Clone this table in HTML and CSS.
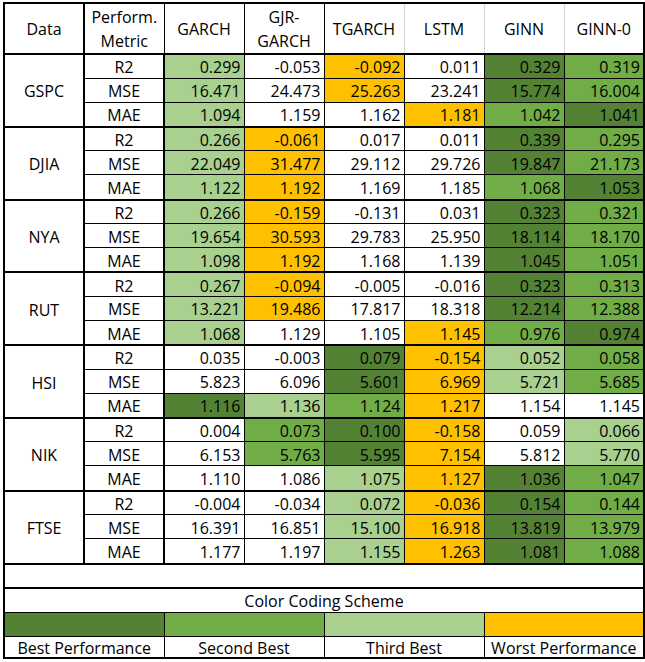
FILE: index.html
```html
<!DOCTYPE html>
<html lang="en">
<head>
<meta charset="utf-8">
<title>Model performance comparison</title>
<link rel="stylesheet" href="styles.css">
</head>
<body>
<table class="results">
  <colgroup>
    <col class="col"><col class="col"><col class="col"><col class="col"><col class="col"><col class="col"><col class="col"><col class="col">
  </colgroup>
  <thead>
    <tr class="head">
      <th class="h-data">Data</th>
      <th class="h-metric">Perform.<br>Metric</th>
      <th class="h-dark">GARCH</th>
      <th class="h-dark">GJR-<br>GARCH</th>
      <th>TGARCH</th>
      <th>LSTM</th>
      <th>GINN</th>
      <th class="h-last">GINN-0</th>
    </tr>
  </thead>
  <tbody class="group">
    <tr class="r1"><td class="name" rowspan="3">GSPC</td><td class="metric">R2</td><td class="b3">0.299</td><td>-0.053</td><td class="w">-0.092</td><td>0.011</td><td class="b1">0.329</td><td class="b2">0.319</td></tr>
    <tr class="r2"><td class="metric">MSE</td><td class="b3">16.471</td><td>24.473</td><td class="w">25.263</td><td>23.241</td><td class="b1">15.774</td><td class="b2">16.004</td></tr>
    <tr class="r3"><td class="metric">MAE</td><td class="b3">1.094</td><td>1.159</td><td>1.162</td><td class="w">1.181</td><td class="b2">1.042</td><td class="b1">1.041</td></tr>
  </tbody>
  <tbody class="group">
    <tr class="r1"><td class="name" rowspan="3">DJIA</td><td class="metric">R2</td><td class="b3">0.266</td><td class="w">-0.061</td><td>0.017</td><td>0.011</td><td class="b1">0.339</td><td class="b2">0.295</td></tr>
    <tr class="r2"><td class="metric">MSE</td><td class="b3">22.049</td><td class="w">31.477</td><td>29.112</td><td>29.726</td><td class="b1">19.847</td><td class="b2">21.173</td></tr>
    <tr class="r3"><td class="metric">MAE</td><td class="b3">1.122</td><td class="w">1.192</td><td>1.169</td><td>1.185</td><td class="b2">1.068</td><td class="b1">1.053</td></tr>
  </tbody>
  <tbody class="group">
    <tr class="r1"><td class="name" rowspan="3">NYA</td><td class="metric">R2</td><td class="b3">0.266</td><td class="w">-0.159</td><td>-0.131</td><td>0.031</td><td class="b1">0.323</td><td class="b2">0.321</td></tr>
    <tr class="r2"><td class="metric">MSE</td><td class="b3">19.654</td><td class="w">30.593</td><td>29.783</td><td>25.950</td><td class="b1">18.114</td><td class="b2">18.170</td></tr>
    <tr class="r3"><td class="metric">MAE</td><td class="b3">1.098</td><td class="w">1.192</td><td>1.168</td><td>1.139</td><td class="b1">1.045</td><td class="b2">1.051</td></tr>
  </tbody>
  <tbody class="group">
    <tr class="r1"><td class="name" rowspan="3">RUT</td><td class="metric">R2</td><td class="b3">0.267</td><td class="w">-0.094</td><td>-0.005</td><td>-0.016</td><td class="b1">0.323</td><td class="b2">0.313</td></tr>
    <tr class="r2"><td class="metric">MSE</td><td class="b3">13.221</td><td class="w">19.486</td><td>17.817</td><td>18.318</td><td class="b1">12.214</td><td class="b2">12.388</td></tr>
    <tr class="r3"><td class="metric">MAE</td><td class="b3">1.068</td><td>1.129</td><td>1.105</td><td class="w">1.145</td><td class="b2">0.976</td><td class="b1">0.974</td></tr>
  </tbody>
  <tbody class="group">
    <tr class="r1"><td class="name" rowspan="3">HSI</td><td class="metric">R2</td><td>0.035</td><td>-0.003</td><td class="b1">0.079</td><td class="w">-0.154</td><td class="b3">0.052</td><td class="b2">0.058</td></tr>
    <tr class="r2"><td class="metric">MSE</td><td>5.823</td><td>6.096</td><td class="b1">5.601</td><td class="w">6.969</td><td class="b3">5.721</td><td class="b2">5.685</td></tr>
    <tr class="r3"><td class="metric">MAE</td><td class="b1">1.116</td><td class="b3">1.136</td><td class="b2">1.124</td><td class="w">1.217</td><td>1.154</td><td>1.145</td></tr>
  </tbody>
  <tbody class="group">
    <tr class="r1"><td class="name" rowspan="3">NIK</td><td class="metric">R2</td><td>0.004</td><td class="b2">0.073</td><td class="b1">0.100</td><td class="w">-0.158</td><td>0.059</td><td class="b3">0.066</td></tr>
    <tr class="r2"><td class="metric">MSE</td><td>6.153</td><td class="b2">5.763</td><td class="b1">5.595</td><td class="w">7.154</td><td>5.812</td><td class="b3">5.770</td></tr>
    <tr class="r3"><td class="metric">MAE</td><td>1.110</td><td>1.086</td><td class="b3">1.075</td><td class="w">1.127</td><td class="b1">1.036</td><td class="b2">1.047</td></tr>
  </tbody>
  <tbody class="group">
    <tr class="r1"><td class="name" rowspan="3">FTSE</td><td class="metric">R2</td><td>-0.004</td><td>-0.034</td><td class="b3">0.072</td><td class="w">-0.036</td><td class="b1">0.154</td><td class="b2">0.144</td></tr>
    <tr class="r2"><td class="metric">MSE</td><td>16.391</td><td>16.851</td><td class="b3">15.100</td><td class="w">16.918</td><td class="b1">13.819</td><td class="b2">13.979</td></tr>
    <tr class="r3"><td class="metric">MAE</td><td>1.177</td><td>1.197</td><td class="b3">1.155</td><td class="w">1.263</td><td class="b1">1.081</td><td class="b2">1.088</td></tr>
  </tbody>
  <tbody class="legend">
    <tr class="blank"><td colspan="8"></td></tr>
    <tr class="title"><td colspan="8">Color Coding Scheme</td></tr>
    <tr class="swatches"><td colspan="2" class="b1"></td><td colspan="2" class="b2"></td><td colspan="2" class="b3"></td><td colspan="2" class="w"></td></tr>
    <tr class="labels"><td colspan="2">Best Performance</td><td colspan="2">Second Best</td><td colspan="2">Third Best</td><td colspan="2">Worst Performance</td></tr>
  </tbody>
</table>
</body>
</html>
```

FILE: styles.css
```css
html, body {
  margin: 0;
  padding: 0;
  background: #ffffff;
}

body {
  font-family: "Open Sans", "Liberation Sans", sans-serif;
  font-size: 16px;
  color: #000000;
  padding: 2px 0 0 3px;
}

.results {
  border-collapse: collapse;
  table-layout: fixed;
  width: 638px;
  border: 2px solid #000;
}

.col {
  width: 80px;
}

.results th,
.results td {
  padding: 0 3px;
  line-height: 20px;
  border: 1px solid #000;
  overflow: hidden;
  white-space: nowrap;
}

/* header */
.head {
  height: 48px;
}

.head th {
  font-weight: normal;
  text-align: center;
  vertical-align: middle;
  line-height: 24px;
  padding-top: 1px;
  border-top: 2px solid #000;
  border-bottom: 2px solid #000;
  border-left: 1px solid #d4d4d4;
  border-right: 1px solid #d4d4d4;
}

.head th.h-data {
  border-left: 2px solid #000;
  border-right: 2px solid #000;
}

.head th.h-metric {
  border-right: 1px solid #000;
}

.head th.h-dark {
  border-right: 1px solid #000;
}

.head th.h-last {
  border-right: 2px solid #000;
}

/* body groups */
.group td {
  text-align: right;
  vertical-align: middle;
  padding-top: 2px;
}

.group .r1 { height: 24px; }
.group .r2 { height: 24px; }
.group .r3 { height: 24.8px; }

.group .r3 td,
.group td.name {
  border-bottom: 2px solid #000;
}

.group td.name {
  text-align: center;
  border-left: 2px solid #000;
  border-right: 2px solid #000;
}

.group td.metric {
  text-align: center;
  border-right: 2px solid #000;
}

.group td:last-child {
  border-right: 2px solid #000;
}

/* colour coding */
.b1 { background: #548235; }
.b2 { background: #70ad47; }
.b3 { background: #a9d08e; }
.w  { background: #ffc000; }

/* legend */
.legend td {
  text-align: center;
  vertical-align: middle;
  border-left: 2px solid #000;
  border-right: 2px solid #000;
}

.legend .blank { height: 24px; }
.legend .blank td { border-bottom: 2px solid #000; }

.legend .title { height: 25px; }
.legend .title td { padding-top: 1px; }

.legend .swatches { height: 24px; }

.legend .swatches td,
.legend .labels td {
  border-left: 1px solid #000;
  border-right: 1px solid #000;
}

.legend .swatches td:first-child,
.legend .labels td:first-child {
  border-left: 2px solid #000;
}

.legend .swatches td:last-child,
.legend .labels td:last-child {
  border-right: 2px solid #000;
}

.legend .labels { height: 21px; }

.legend .labels td {
  border-bottom: 2px solid #000;
  line-height: 18px;
  padding-top: 2px;
}
```
